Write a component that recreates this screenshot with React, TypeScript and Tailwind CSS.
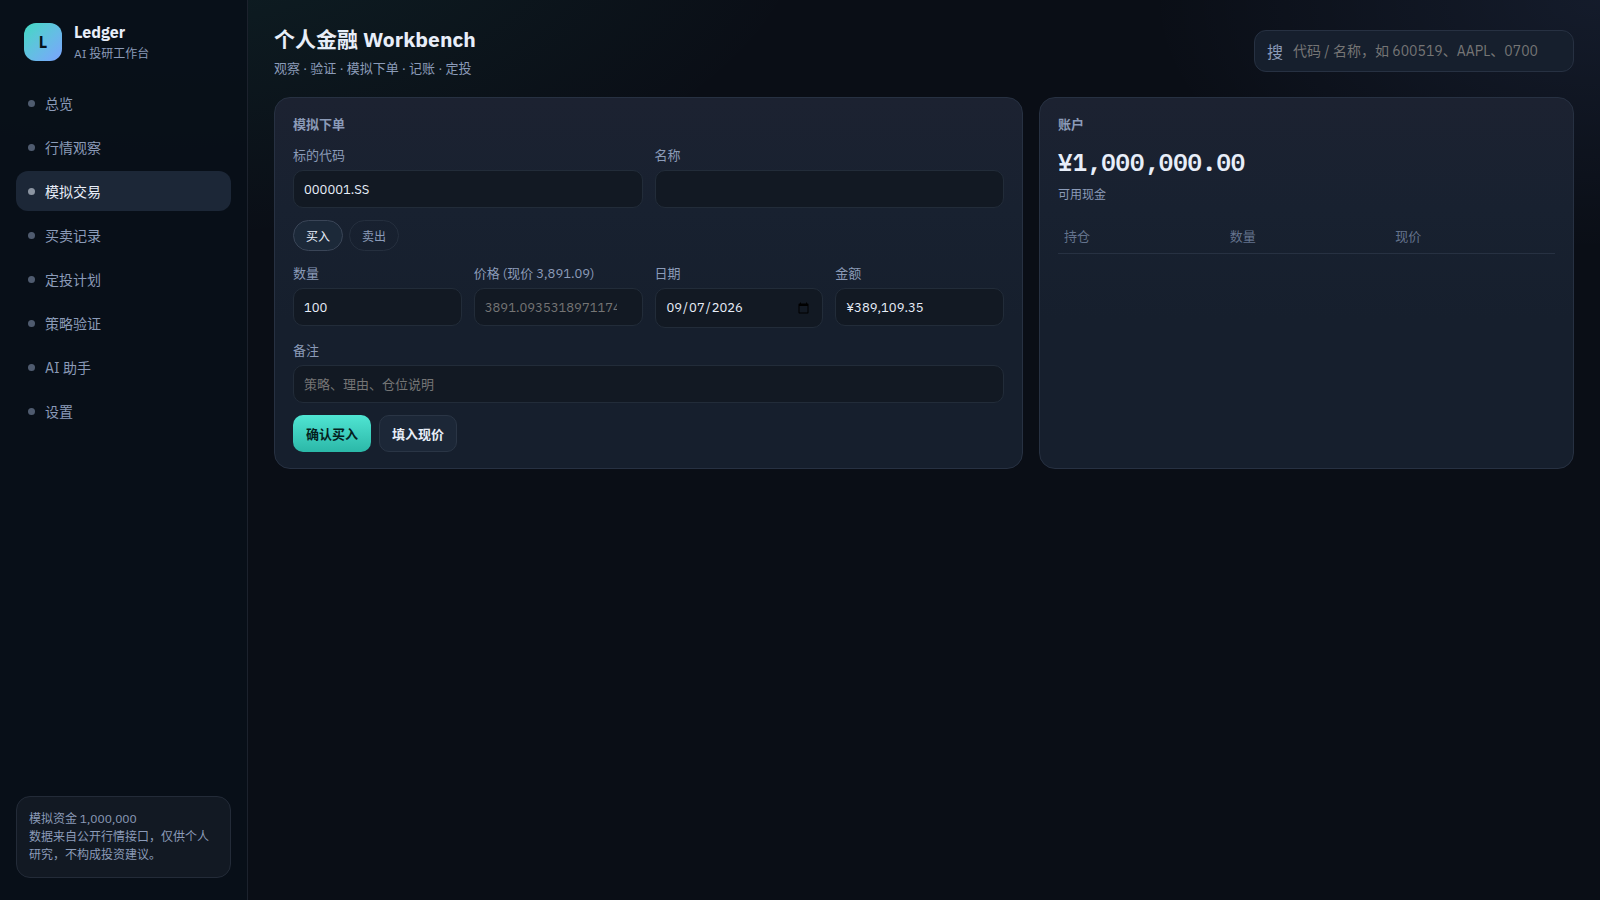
import { useState } from 'react'
import type { InputHTMLAttributes } from 'react'

const navItems = ['总览', '行情观察', '模拟交易', '买卖记录', '定投计划', '策略验证', 'AI 助手', '设置']

const money = (n: number) =>
  '¥' + n.toLocaleString('en-US', { minimumFractionDigits: 2, maximumFractionDigits: 2 })

const card =
  'rounded-2xl border border-[#273142] bg-linear-to-b from-[#1c2231] via-[#182130] via-30% to-[#161f2d] to-60% px-[18px] pt-[18px] pb-4'

function Sidebar() {
  const [active, setActive] = useState('模拟交易')

  return (
    <aside className="flex w-[248px] shrink-0 flex-col border-r border-[#1c222d] bg-[#081018]/90 px-4 py-[22px]">
      <div className="flex items-center gap-3 px-2 pb-[21px]">
        <div className="flex size-[38px] items-center justify-center rounded-xl bg-linear-135 from-[#3dd9c1] to-[#7aa2ff] font-bold text-[#06121a]">
          L
        </div>
        <div>
          <div className="text-base leading-5 font-bold text-[#e8eef9]">Ledger</div>
          <div className="pt-1 text-xs leading-4 text-[#8b9bb8]">AI 投研工作台</div>
        </div>
      </div>
      <nav className="flex flex-col gap-1">
        {navItems.map((item) => (
          <button
            key={item}
            type="button"
            onClick={() => setActive(item)}
            className={`flex h-10 items-center gap-2.5 rounded-xl px-3 text-left text-sm ${
              item === active ? 'bg-[#1c2737] text-[#e8eef9]' : 'text-[#8b9bb8]'
            }`}
          >
            <span className="size-[7px] rounded-full bg-current opacity-55" />
            <span className="pt-0.5">{item}</span>
          </button>
        ))}
      </nav>
      <div className="mt-auto rounded-[14px] border border-[#232b38] bg-[#121923] px-3 py-[13px] text-xs leading-[18px] text-[#8b9bb8]">
        模拟资金 1,000,000
        <br />
        数据来自公开行情接口，仅供个人研究，不构成投资建议。
      </div>
    </aside>
  )
}

type FieldProps = InputHTMLAttributes<HTMLInputElement> & { id: string; label: string }

function Field({ id, label, type = 'text', ...rest }: FieldProps) {
  return (
    <div className="flex min-w-0 flex-col gap-1">
      <label htmlFor={id} className="text-[13px] leading-[21px] text-[#8b9bb8]">
        {label}
      </label>
      <input
        id={id}
        type={type}
        className={`w-full rounded-[10px] border border-[#222c39] bg-[#121923] px-2.5 text-[13px] text-[#e8eef9] outline-none placeholder:text-[#757575] ${
          type === 'date' ? 'h-10' : 'h-[38px]'
        }`}
        {...rest}
      />
    </div>
  )
}

function OrderForm() {
  const [side, setSide] = useState('买入')
  const [symbol, setSymbol] = useState('000001.SS')
  const [name, setName] = useState('')
  const [qty, setQty] = useState('100')
  const [price, setPrice] = useState('')
  const [date, setDate] = useState('2026-09-07')
  const [note, setNote] = useState('')
  const last = 3891.0935318971174
  const amount = Number(qty) * (Number(price) || last)

  return (
    <section className={card}>
      <h2 className="mb-3 text-[13px] leading-[17px] font-semibold text-[#8b9bb8]">模拟下单</h2>
      <form className="flex flex-col gap-3" onSubmit={(e) => e.preventDefault()}>
        <div className="grid grid-cols-2 gap-3">
          <Field id="symbol" label="标的代码" value={symbol} onChange={(e) => setSymbol(e.target.value)} />
          <Field id="name" label="名称" value={name} onChange={(e) => setName(e.target.value)} />
        </div>
        <div className="flex gap-1.5">
          {['买入', '卖出'].map((s) => (
            <button
              key={s}
              type="button"
              aria-pressed={s === side}
              onClick={() => setSide(s)}
              className={`h-[31px] rounded-full border px-3 pt-0.5 text-xs ${
                s === side ? 'border-[#3a4557] bg-[#1c2939] text-[#e8eef9]' : 'border-[#252f3e] text-[#8b9bb8]'
              }`}
            >
              {s}
            </button>
          ))}
        </div>
        <div className="grid grid-cols-4 gap-3">
          <Field id="qty" label="数量" type="number" value={qty} onChange={(e) => setQty(e.target.value)} />
          <Field
            id="price"
            label="价格 (现价 3,891.09)"
            type="number"
            placeholder={String(last)}
            value={price}
            onChange={(e) => setPrice(e.target.value)}
          />
          <Field id="date" label="日期" type="date" value={date} onChange={(e) => setDate(e.target.value)} />
          <Field id="amount" label="金额" readOnly value={money(amount)} />
        </div>
        <Field id="note" label="备注" placeholder="策略、理由、仓位说明" value={note} onChange={(e) => setNote(e.target.value)} />
        <div className="flex gap-2">
          <button
            type="submit"
            className="h-[37px] rounded-[10px] bg-linear-to-b from-[#4fe5d3] to-[#2bb8a8] px-[13px] pt-0.5 text-[13px] font-semibold text-[#04211d]"
          >
            确认{side}
          </button>
          <button
            type="button"
            onClick={() => setPrice(last.toFixed(2))}
            className="h-[37px] rounded-[10px] border border-[#2a3545] bg-[#1c2737] px-3 pt-0.5 text-[13px] font-semibold text-[#e8eef9]"
          >
            填入现价
          </button>
        </div>
      </form>
    </section>
  )
}

function Account() {
  return (
    <section className={card}>
      <h2 className="mb-3 text-[13px] leading-[17px] font-semibold text-[#8b9bb8]">账户</h2>
      <div className="font-['IBM_Plex_Mono','Liberation_Mono',monospace] text-2xl leading-[34px] font-semibold text-[#e8eef9]">
        {money(1000000)}
      </div>
      <div className="mt-1.5 text-xs leading-5 text-[#8b9bb8]">可用现金</div>
      <table className="mt-4 w-full table-fixed text-left text-[13px] text-[#64738d]">
        <thead>
          <tr className="border-b border-[#273142]">
            {['持仓', '数量', '现价'].map((h) => (
              <th key={h} className="px-1.5 py-[7px] leading-[18px] font-normal">{h}</th>
            ))}
          </tr>
        </thead>
        <tbody />
      </table>
    </section>
  )
}

export default function App() {
  return (
    <div className="flex min-h-screen bg-[#0a0e16] bg-[radial-gradient(1200px_600px_at_10%_-10%,rgba(61,217,193,0.09),transparent_55%),radial-gradient(900px_500px_at_100%_0%,rgba(122,162,255,0.09),transparent_50%)] font-['IBM_Plex_Sans','Noto_Sans_CJK_SC',sans-serif] text-[#e8eef9]">
      <Sidebar />
      <main className="min-w-0 flex-1 px-[26px] py-[22px]">
        <header className="mb-[18px] flex items-center justify-between gap-4">
          <div>
            <h1 className="text-[21px] leading-[35px] font-bold">个人金融 Workbench</h1>
            <p className="pt-0.5 text-[13px] leading-5 text-[#8b9bb8]">观察 · 验证 · 模拟下单 · 记账 · 定投</p>
          </div>
          <div className="flex h-[42px] w-80 items-center gap-2.5 rounded-xl border border-[#273142] bg-[#161f2d] px-3">
            <label htmlFor="search" className="pt-0.5 text-base text-[#8b9bb8]">搜</label>
            <input
              id="search"
              placeholder="代码 / 名称，如 600519、AAPL、0700"
              className="min-w-0 flex-1 bg-transparent text-sm text-[#e8eef9] outline-none placeholder:text-[#757575]"
            />
          </div>
        </header>
        <div className="grid grid-cols-[1.4fr_1fr] gap-4">
          <OrderForm />
          <Account />
        </div>
      </main>
    </div>
  )
}
